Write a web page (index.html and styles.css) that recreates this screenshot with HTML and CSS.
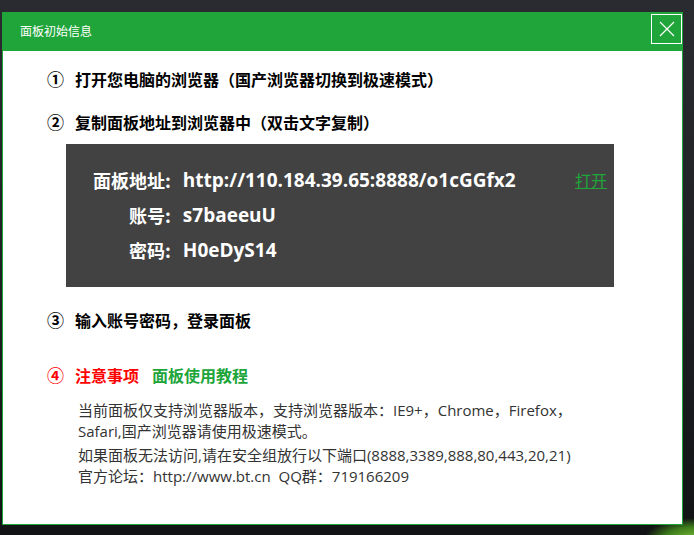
FILE: index.html
```html
<!DOCTYPE html>
<html lang="zh-CN">
<head>
<meta charset="utf-8">
<title>面板初始信息</title>
<link rel="stylesheet" href="styles.css">
</head>
<body>
<div class="window">
  <div class="header">
    <span class="title">面板初始信息</span>
    <span class="close"><svg width="18" height="18" viewBox="0 0 18 18"><path d="M2 2 L16 16 M16 2 L2 16" stroke="#fff" stroke-width="1.2" fill="none"/></svg></span>
  </div>
  <div class="content">
    <div class="step"><span class="num">①</span>打开您电脑的浏览器（国产浏览器切换到极速模式）</div>
    <div class="step step2"><span class="num">②</span>复制面板地址到浏览器中（双击文字复制）</div>
    <div class="infobox">
      <div class="row">
        <span class="label">面板地址:</span>
        <span class="value">http://110.184.39.65:8888/o1cGGfx2</span>
        <a class="open">打开</a>
      </div>
      <div class="row">
        <span class="label">账号:</span>
        <span class="value">s7baeeuU</span>
      </div>
      <div class="row">
        <span class="label">密码:</span>
        <span class="value">H0eDyS14</span>
      </div>
    </div>
    <div class="step step3"><span class="num">③</span>输入账号密码，登录面板</div>
    <div class="step step4"><span class="num red">④</span><span class="red">注意事项</span><span class="guide">面板使用教程</span></div>
    <div class="notes">
      <p>当前面板仅支持浏览器版本，支持浏览器版本：IE9+，Chrome，Firefox，<br>Safari,国产浏览器请使用极速模式。</p>
      <p class="p2">如果面板无法访问,请在安全组放行以下端口(8888,3389,888,80,443,20,21)<br>官方论坛：http://www.bt.cn&nbsp; QQ群：719166209</p>
    </div>
  </div>
</div>
</body>
</html>
```
FILE: styles.css
```css
html, body {
  margin: 0;
  padding: 0;
}
body {
  width: 694px;
  height: 535px;
  overflow: hidden;
  background:
    radial-gradient(ellipse 50px 22px at 694px 540px, #7cc23a 0%, #3c7a1c 60%, rgba(30,40,20,0) 100%),
    linear-gradient(180deg, #2a2b30 0%, #1d1e22 60%, #121314 100%);
  font-family: "Noto Sans CJK SC", sans-serif;
}
.window {
  margin: 12px 0 0 2px;
  width: 679px;
  height: 511px;
  border: 1px solid #20a53a;
  background: #fff;
}
.header {
  height: 38px;
  background: #20a53a;
  display: flex;
  justify-content: space-between;
  align-items: flex-start;
}
.title {
  color: #fff;
  font-size: 12px;
  line-height: 36px;
  margin-left: 17px;
}
.close {
  margin-top: 1px;
  width: 29px;
  height: 28px;
  border: 1px solid #fff;
  display: flex;
  align-items: center;
  justify-content: center;
}
.close svg { display: block; }
.content {
  padding: 16px 0 0 44px;
}
.step {
  font-size: 16px;
  font-weight: 700;
  line-height: 24px;
  color: #000;
}
.num {
  display: inline-block;
  width: 28px;
  font-weight: 700;
  font-size: 17px;
}
.step2 { margin-top: 19px; }
.infobox {
  margin: 10px 0 0 19px;
  width: 548px;
  box-sizing: border-box;
  height: 143px;
  padding: 18px 7px 0 27px;
  background: #424242;
  display: grid;
  grid-template-columns: max-content 1fr max-content;
  grid-auto-rows: 35px;
  column-gap: 12px;
  align-items: center;
  align-content: start;
}
.row {
  display: contents;
}
.label {
  grid-column: 1;
  text-align: right;
  color: #fff;
  font-size: 18px;
  font-weight: 700;
}
.value {
  grid-column: 2;
  color: #fff;
  font-family: "Open Sans", "Noto Sans CJK SC", sans-serif;
  font-size: 19px;
  font-weight: 700;
}
.open {
  grid-column: 3;
  justify-self: end;
  color: #20a53a;
  font-size: 16px;
  text-decoration: underline;
}
.step3 { margin-top: 21px; }
.step4 { margin-top: 31px; }
.red { color: #ff0000; }
.guide {
  color: #20a53a;
  margin-left: 13px;
}
.notes {
  margin: 13px 0 0 31px;
  font-family: "Open Sans", "Noto Sans CJK SC", sans-serif;
  font-size: 15px;
  line-height: 21px;
  color: #333;
}
.notes p { margin: 0; }
.notes .p2 { margin-top: 3px; }
```
